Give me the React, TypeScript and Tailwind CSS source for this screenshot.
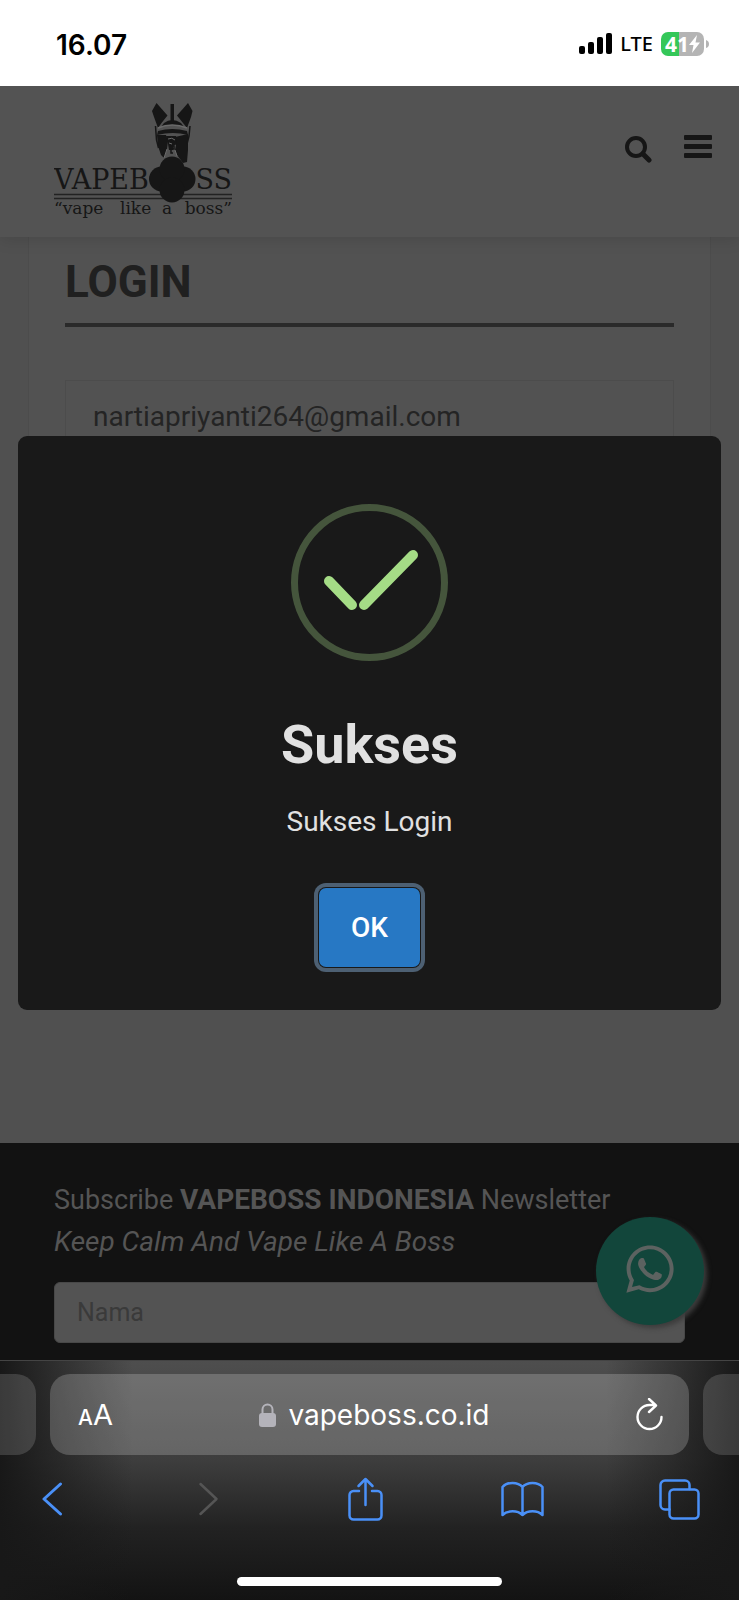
import { FaWhatsapp } from "react-icons/fa";

const SignalIcon = () => (
  <svg width="33" height="22" viewBox="0 0 33 22" aria-hidden="true">
    <rect x="0" y="13" width="6" height="8" rx="2" />
    <rect x="9" y="9" width="6" height="12" rx="2" />
    <rect x="18" y="4" width="6" height="17" rx="2" />
    <rect x="27" y="0" width="6" height="21" rx="2" />
  </svg>
);

const Battery = () => (
  <div className="flex items-center gap-[2px]">
    <div className="flex h-6 w-[43px] items-center justify-center rounded-[7px] bg-[linear-gradient(to_right,#34c759_18px,#b4b4b4_18px)] font-['Noto_Sans',sans-serif] text-[21px] leading-6 font-bold text-white">
      41
      <svg width="11" height="18" viewBox="0 0 11 18" fill="#fff" aria-hidden="true">
        <path d="M8 0 0 10h4.500L3 18l8-10.500H6.500z" />
      </svg>
    </div>
    <svg width="3" height="8" viewBox="0 0 3 8" fill="#b4b4b4" aria-hidden="true">
      <path d="M0 0Q3 1 3 4T0 8z" />
    </svg>
  </div>
);

const StatusBar = () => (
  <div className="flex h-[86px] items-center justify-between bg-white pr-[30px] pl-[56px] font-['Inter',sans-serif] text-black">
    <span className="pt-1 text-[28px] font-semibold">16.07</span>
    <div className="flex items-center gap-2 pt-[2px]">
      <SignalIcon />
      <span className="font-['Noto_Sans',sans-serif] text-[20px] leading-6 font-medium">LTE</span>
      <Battery />
    </div>
  </div>
);

const Logo = () => (
  <svg
    width="180"
    height="118"
    viewBox="0 0 180 118"
    fill="#161616"
    role="img"
    aria-label="Vapeboss"
  >
    {/* ears and mane */}
    <path d="M98 8 102.500 0 113.500 12.500 107.500 20 104 25 100 14z" />
    <path d="M138.500 8 134 0 123 12.500 129 20 133 25 137 14z" />
    <path d="M116.500 1h3.500v17h-3.500z" />
    {/* forehead */}
    <path d="M110 20q8-6 17 0l3 4q-12-4-23 0z" />
    <path d="M104 25q14-6 29 0" fill="none" stroke="#6a6a6a" strokeWidth="1.500" />
    <path d="M104 28q14-4 29 0l1 4q-15-4-31 0z" />
    {/* cheeks */}
    <path d="M103 32h9l2 6-1 8-3 9-3-3-3-9z" />
    <path d="M134 31 121 34l1 8-1 5 2 5 6 8 4-1 1-12z" />
    <path d="M112 33h10l1 8-4 2v4h-4l-1-6z" />
    <path d="M114 36q4-2 7 1M115 40l3 1M113 46l-3 9M121 47l2 6" fill="none" stroke="#6a6a6a" />
    <path d="M116 43h4v3h-3v4h2" fill="none" stroke="#161616" strokeWidth="1.500" />
    <path d="m101.500 23 1 14 2 8M136 23l-1 10-2 8" fill="none" stroke="#161616" strokeWidth="1.500" />
    {/* double rule under the name */}
    <path d="M0 91.500h178M0 95.500h178" stroke="#222" strokeWidth="1.500" />
    {/* quatrefoil in place of the O */}
    <circle cx="107.500" cy="76" r="12.500" />
    <circle cx="129" cy="76" r="12.500" />
    <circle cx="118" cy="66" r="12.500" />
    <circle cx="118" cy="87" r="12.500" />
    <text x="0" y="86" fontSize="27" fontFamily="'DejaVu Serif', serif">
      VAPEB
    </text>
    <text x="178" y="86" textAnchor="end" fontSize="27" fontFamily="'DejaVu Serif', serif">
      SS
    </text>
    <g fontSize="17" fontFamily="'DejaVu Serif', serif">
      <text x="0" y="111">“vape</text>
      <text x="66" y="111">like</text>
      <text x="108" y="111">a</text>
      <text x="178" y="111" textAnchor="end">boss”</text>
    </g>
  </svg>
);

const Header = () => (
  <header className="relative flex h-[151px] justify-between bg-[#535353] pr-[27px] pl-[54px] shadow-[0_2px_16px_rgba(0,0,0,0.12)]">
    <a href="#home" className="pt-[17px]">
      <Logo />
    </a>
    <div className="flex items-start gap-8 pt-[49px]">
      <button type="button" aria-label="Cari" className="pt-px">
        <svg width="27" height="27" viewBox="0 0 27 27" fill="none" stroke="#161616" aria-hidden="true">
          <circle cx="11" cy="11" r="9" strokeWidth="4" />
          <path d="m18 18 6 6" strokeWidth="5" strokeLinecap="round" />
        </svg>
      </button>
      <button type="button" aria-label="Menu">
        <svg width="28" height="24" viewBox="0 0 28 24" fill="#161616" aria-hidden="true">
          <rect width="28" height="5" rx="1" />
          <rect y="9" width="28" height="5" rx="1" />
          <rect y="18" width="28" height="5" rx="1" />
        </svg>
      </button>
    </div>
  </header>
);

const LoginSection = () => (
  <main className="h-[906px] bg-[#505050] px-7">
    <form className="h-[640px] border-x border-[#4c4c4c] bg-[#525252] px-9 pt-[18px]">
      <h1 className="border-b-4 border-[#2a2a2a] pb-[14px] text-[44px] leading-[54px] font-bold text-[#202020]">
        LOGIN
      </h1>
      <input
        type="email"
        aria-label="Email"
        defaultValue="nartiapriyanti264@gmail.com"
        className="mt-[53px] h-[72px] w-full border border-[#4c4c4c] px-[27px] text-[28px] text-[#242424]"
      />
    </form>
  </main>
);

const Newsletter = () => (
  <footer className="relative bg-[#121212] px-[54px] pt-9 pb-[17px] text-[#555]">
    <p className="text-[27px] leading-[42px]">
      Subscribe <strong className="text-[28px]">VAPEBOSS INDONESIA</strong> Newsletter
    </p>
    <p className="text-[28px] leading-[42px] italic">Keep Calm And Vape Like A Boss</p>
    <input
      type="text"
      aria-label="Nama"
      placeholder="Nama"
      className="mt-[19px] block h-[61px] w-full rounded-[6px] border border-[#484848] bg-[#535353] px-[22px] text-[25px] placeholder:text-[#3a3a3a]"
    />
    <a
      href="#whatsapp"
      aria-label="WhatsApp"
      className="absolute top-[74px] right-[35px] flex size-[108px] items-center justify-center rounded-full bg-[#12463b] pb-1 text-[#5c6260] shadow-[3px_3px_5px_#3c3c3c]"
    >
      <FaWhatsapp size={54} />
    </a>
  </footer>
);

const SuccessDialog = () => (
  <div className="absolute inset-0 flex items-center px-[18px]">
    <div
      role="dialog"
      aria-labelledby="dialog-title"
      className="flex w-full flex-col items-center rounded-[9px] bg-[#191919] pt-[68px] pb-[43px]"
    >
      <svg width="157" height="157" viewBox="0 0 157 157" fill="none" aria-hidden="true">
        <circle cx="78.500" cy="78.500" r="75" stroke="#45553c" strokeWidth="7" />
        <path
          d="m38 77 23 24M73 101l49-50"
          stroke="#a5dc86"
          strokeWidth="10"
          strokeLinecap="round"
        />
      </svg>
      <h2 id="dialog-title" className="mt-[52px] text-[54px] leading-[64px] font-bold text-[#e1e1e1]">
        Sukses
      </h2>
      <p className="mt-[25px] text-[28px] leading-10 text-[#e1e1e1]">Sukses Login</p>
      <button
        type="button"
        className="mt-[46px] h-[79px] rounded-[7px] bg-[#2778c4] px-8 text-[28px] font-medium text-white shadow-[0_0_0_1px_#191919,0_0_0_5px_#4d6073]"
      >
        OK
      </button>
    </div>
  </div>
);

const AddressBar = () => (
  <div className="flex h-[81px] gap-[14px]">
    <div className="w-9 rounded-r-[20px] bg-white/15" />
    <div className="flex flex-1 items-center justify-between rounded-[20px] bg-white/20 pr-[26px] pl-7">
      <button type="button" aria-label="Pengaturan halaman" className="flex items-baseline">
        <span className="text-[21px] font-medium">A</span>
        <span className="text-[29px]">A</span>
      </button>
      <a href="#address" className="flex items-center gap-3 text-[28px]">
        <svg width="17" height="24" viewBox="0 0 17 24" aria-hidden="true">
          <path d="M3.500 12V6.500a5 5 0 0 1 10 0V12" fill="none" stroke="#b4b3ba" strokeWidth="2" />
          <rect y="10" width="17" height="14" rx="3" fill="#b4b3ba" />
        </svg>
        vapeboss.co.id
      </a>
      <button type="button" aria-label="Muat ulang">
        <svg
          width="27"
          height="34"
          viewBox="0 0 27 34"
          fill="none"
          stroke="#fff"
          strokeWidth="2.400"
          strokeLinecap="round"
          strokeLinejoin="round"
          aria-hidden="true"
        >
          <path d="M25.500 19A12 12 0 1 1 13.500 7H19.500M13 1l7 6.500-7 6.500" />
        </svg>
      </button>
    </div>
    <div className="w-9 rounded-l-[20px] bg-white/15" />
  </div>
);

const iconProps = {
  fill: "none",
  stroke: "#4a90f7",
  strokeWidth: 2.5,
  strokeLinecap: "round",
  strokeLinejoin: "round",
  "aria-hidden": true,
} as const;

const Toolbar = () => (
  <nav className="flex h-[44px] items-center justify-between pr-[38px] pl-[30px] [&>button]:flex [&>button]:w-11 [&>button]:justify-center">
    <button type="button" aria-label="Kembali">
      <svg width="21" height="34" viewBox="0 0 21 34" {...iconProps} strokeWidth={3}>
        <path d="M18.500 2 2 17l16.500 15" />
      </svg>
    </button>
    <button type="button" aria-label="Maju" disabled>
      <svg width="21" height="34" viewBox="0 0 21 34" {...iconProps} stroke="#555">
        <path d="m2.500 2 16 15-16 15" />
      </svg>
    </button>
    <button type="button" aria-label="Bagikan">
      <svg width="35" height="44" viewBox="0 0 35 44" {...iconProps}>
        <path d="M11 14H5.500a4 4 0 0 0-4 4v20.500a4 4 0 0 0 4 4h24a4 4 0 0 0 4-4V18a4 4 0 0 0-4-4H24M17.500 28V2M10.500 9l7-7 7 7" />
      </svg>
    </button>
    <button type="button" aria-label="Bookmark">
      <svg width="43" height="36" viewBox="0 0 43 36" {...iconProps}>
        <path d="M21.500 6C17 .5 6 .5 1.500 6v28c5-5 15-5 20 0 5-5 15-5 20 0V6C37 .5 26 .5 21.500 6zM21.500 6v28" />
      </svg>
    </button>
    <button type="button" aria-label="Tab">
      <svg width="41" height="41" viewBox="0 0 41 41" {...iconProps}>
        <path d="M10.500 30.500H6a4.500 4.500 0 0 1-4.500-4.500V6A4.500 4.500 0 0 1 6 1.500h20A4.500 4.500 0 0 1 30.500 6v4" />
        <rect x="10.500" y="10.500" width="29" height="29" rx="4" />
      </svg>
    </button>
  </nav>
);

const BrowserBar = () => (
  <div className="flex h-60 flex-col border-t border-[#444] bg-[linear-gradient(to_right,#181818,transparent_18%,transparent_82%,#181818),linear-gradient(to_bottom,#4e4e4e,#3d3d3d_42%,#222_70%,#131313)] pt-[13px] font-['Inter',sans-serif] text-white">
    <AddressBar />
    <div className="pt-[22px]">
      <Toolbar />
    </div>
    <div className="mx-auto mt-14 h-[9px] w-[265px] rounded-full bg-white" />
  </div>
);

export default function App() {
  return (
    <div className="bg-[#131313] font-['Roboto',sans-serif]">
      <StatusBar />
      <div className="relative overflow-hidden">
        <Header />
        <LoginSection />
        <Newsletter />
        <SuccessDialog />
      </div>
      <BrowserBar />
    </div>
  );
}
